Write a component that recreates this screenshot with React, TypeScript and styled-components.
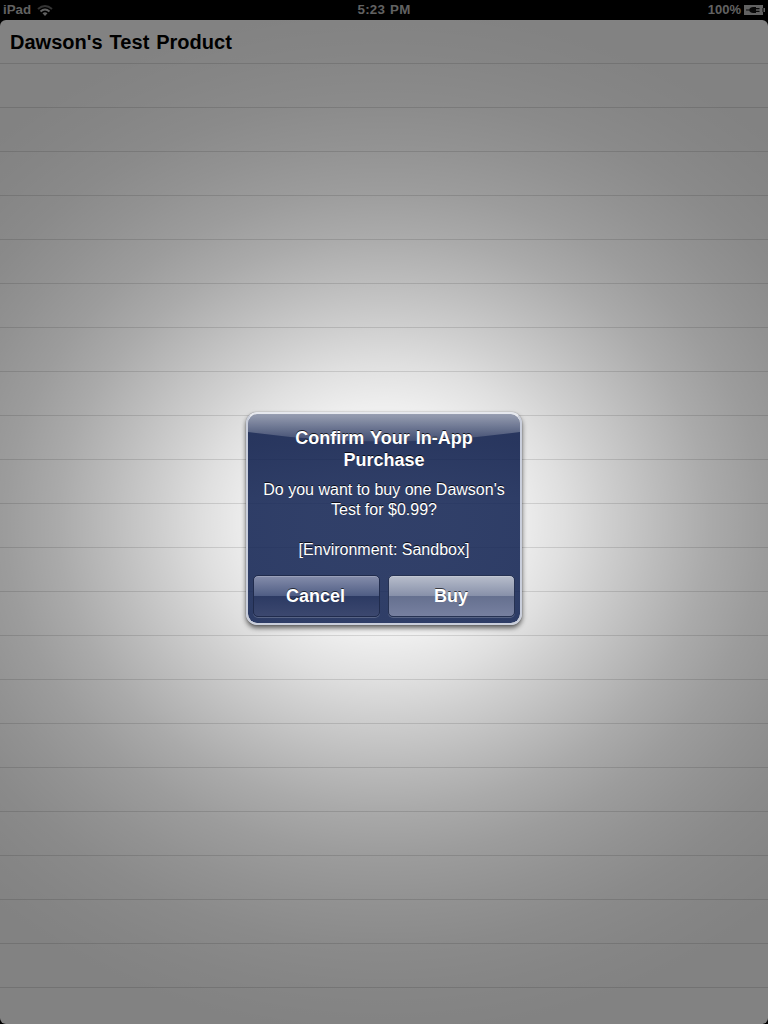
import React from "react";
import styled, { createGlobalStyle } from "styled-components";

const GlobalStyle = createGlobalStyle`
  html, body { margin: 0; background: #000; }
  body { font-family: "Liberation Sans", Arial, Helvetica, sans-serif; overflow: hidden; }
  * { box-sizing: border-box; }
`;

const Screen = styled.div`
  position: relative;
  display: flex;
  flex-direction: column;
  width: 768px;
  height: 1024px;
  background: #000;
  overflow: hidden;
`;

const StatusBar = styled.header`
  display: grid;
  grid-template-columns: 1fr auto 1fr;
  align-items: center;
  height: 20px;
  padding: 0 3px 1px 3px;
  color: #bfbfbf;
  font-size: 13px;
  font-weight: bold;
  line-height: 19px;
`;

const Carrier = styled.div`
  display: flex;
  align-items: center;
  gap: 6px;
  font-size: 13.3px;
`;

const Clock = styled.div`
  font-size: 13.3px;
  letter-spacing: 0.25px;
  word-spacing: 1px;
`;

const Power = styled.div`
  display: flex;
  align-items: center;
  justify-content: flex-end;
  gap: 3px;
`;

const Table = styled.main`
  flex: 1;
  border-radius: 6px;
  background: #fff;
  overflow: hidden;
`;

const Row = styled.div`
  height: 44px;
  padding: 0 10px;
  border-bottom: 1px solid #e0e0e0;
  color: #000;
  font-size: 20px;
  font-weight: bold;
  line-height: 44px;
  letter-spacing: 0.02px;
  word-spacing: 1.3px;
`;

const Dimmer = styled.div`
  position: absolute;
  inset: 0;
  display: flex;
  align-items: center;
  justify-content: center;
  padding-top: 13px;
  background: radial-gradient(
    ellipse 582px 512px at 384px 522px,
    rgba(0, 0, 0, 0) 0%,
    rgba(0, 0, 0, 0.01) 12%,
    rgba(0, 0, 0, 0.065) 23%,
    rgba(0, 0, 0, 0.125) 31%,
    rgba(0, 0, 0, 0.187) 38%,
    rgba(0, 0, 0, 0.263) 47%,
    rgba(0, 0, 0, 0.335) 56%,
    rgba(0, 0, 0, 0.388) 65%,
    rgba(0, 0, 0, 0.427) 74%,
    rgba(0, 0, 0, 0.457) 83%,
    rgba(0, 0, 0, 0.477) 92%,
    rgba(0, 0, 0, 0.49) 100%
  );
`;

const Alert = styled.section`
  position: relative;
  display: flex;
  flex-direction: column;
  width: 276px;
  height: 213px;
  padding: 13px 5px 6px;
  border: 2px solid #c9cedb;
  border-top-color: #e6e8ee;
  border-radius: 11px;
  background: linear-gradient(rgba(14, 30, 76, 0.88) 30px, rgba(20, 37, 84, 0.88) 90px);
  background-clip: padding-box;
  box-shadow: 0 3px 5px rgba(0, 0, 0, 0.6), 0 0 1px rgba(0, 0, 0, 0.5);
  color: #fff;
  text-align: center;
  text-shadow: 0 -1px 0 rgba(0, 0, 0, 0.75);
`;

const Gloss = styled.svg`
  position: absolute;
  top: 0;
  left: 0;
  width: 272px;
  height: 29px;
`;

const Title = styled.h1`
  position: relative;
  margin: 0;
  font-size: 18px;
  line-height: 22px;
  letter-spacing: 0.02px;
  word-spacing: 1px;
`;

const Message = styled.p`
  position: relative;
  margin: 9px 0 0;
  font-size: 16px;
  line-height: 20px;
  white-space: pre-line;
`;

const Actions = styled.div`
  display: flex;
  justify-content: space-between;
  margin-top: auto;
`;

const Button = styled.button<{ $primary?: boolean }>`
  width: 127px;
  height: 42px;
  padding: ${(p) => (p.$primary ? "0 1px 0 0" : "0 2px 0 0")};
  border: 1px solid ${(p) => (p.$primary ? "#263252" : "#202b4c")};
  border-radius: 5px;
  background: ${(p) =>
    p.$primary
      ? "linear-gradient(#b7bdcb 0, #8790a9 20px, #65708f 20px, #7780a0 100%)"
      : "linear-gradient(#858dab 0, #4f5d84 20px, #2c3a63 20px, #3c486f 100%)"};
  box-shadow: 0 1px 0 rgba(255, 255, 255, 0.2),
    inset 0 1px 0 rgba(255, 255, 255, 0.18);
  color: #fff;
  font: bold 18px/40px "Liberation Sans", Arial, sans-serif;
  text-shadow: 0 -1px 0 rgba(0, 0, 0, 0.65);
`;

const WifiIcon = () => (
  <svg width="16" height="12" viewBox="0 0 16 12" fill="none" stroke="#bfbfbf">
    <path d="M1 5Q8-1 15 5" stroke="#666" strokeWidth="2" />
    <path d="M3.5 7.4Q8 3.6 12.5 7.4" strokeWidth="2" />
    <path d="M5.5 9.3Q8 7.4 10.5 9.3L8 11.9Z" fill="#bfbfbf" stroke="none" />
  </svg>
);

const BatteryIcon = () => (
  <svg width="21" height="10" viewBox="0 0 21 10">
    <path d="M0 0H19V3H21V7H19V10H0Z" fill="#bfbfbf" />
    <path
      d="M2 4.5H5.5V3.7Q6.5 2 9 2H12V3H15.5V4.3H12V5.8H15.5V7.1H12V8H9Q6.5 8 5.5 6.3V5.5H2Z"
      fill="#111"
    />
    <path d="M19 3V7" stroke="#111" />
  </svg>
);

const rows = ["Dawson's Test Product", ...Array<string>(22).fill("")];

export default function App() {
  return (
    <>
      <GlobalStyle />
      <Screen>
        <StatusBar>
          <Carrier>
            iPad <WifiIcon />
          </Carrier>
          <Clock>5:23 PM</Clock>
          <Power>
            100% <BatteryIcon />
          </Power>
        </StatusBar>
        <Table>
          {rows.map((label, i) => (
            <Row key={i}>{label}</Row>
          ))}
        </Table>
        <Dimmer>
          <Alert role="alertdialog">
            <Gloss viewBox="0 0 272 29">
              <defs>
                <linearGradient id="gloss" x1="0" y1="0" x2="0" y2="1">
                  <stop offset="0" stopColor="#fff" stopOpacity="0.52" />
                  <stop offset="1" stopColor="#fff" stopOpacity="0.1" />
                </linearGradient>
              </defs>
              <path
                d="M0 9Q0 0 9 0H263Q272 0 272 9V18Q136 37 0 18Z"
                fill="url(#gloss)"
              />
            </Gloss>
            <Title>
              Confirm Your In-App
              <br />
              Purchase
            </Title>
            <Message>
              {"Do you want to buy one Dawson's\nTest for $0.99?\n\n[Environment: Sandbox]"}
            </Message>
            <Actions>
              <Button>Cancel</Button>
              <Button $primary>Buy</Button>
            </Actions>
          </Alert>
        </Dimmer>
      </Screen>
    </>
  );
}
